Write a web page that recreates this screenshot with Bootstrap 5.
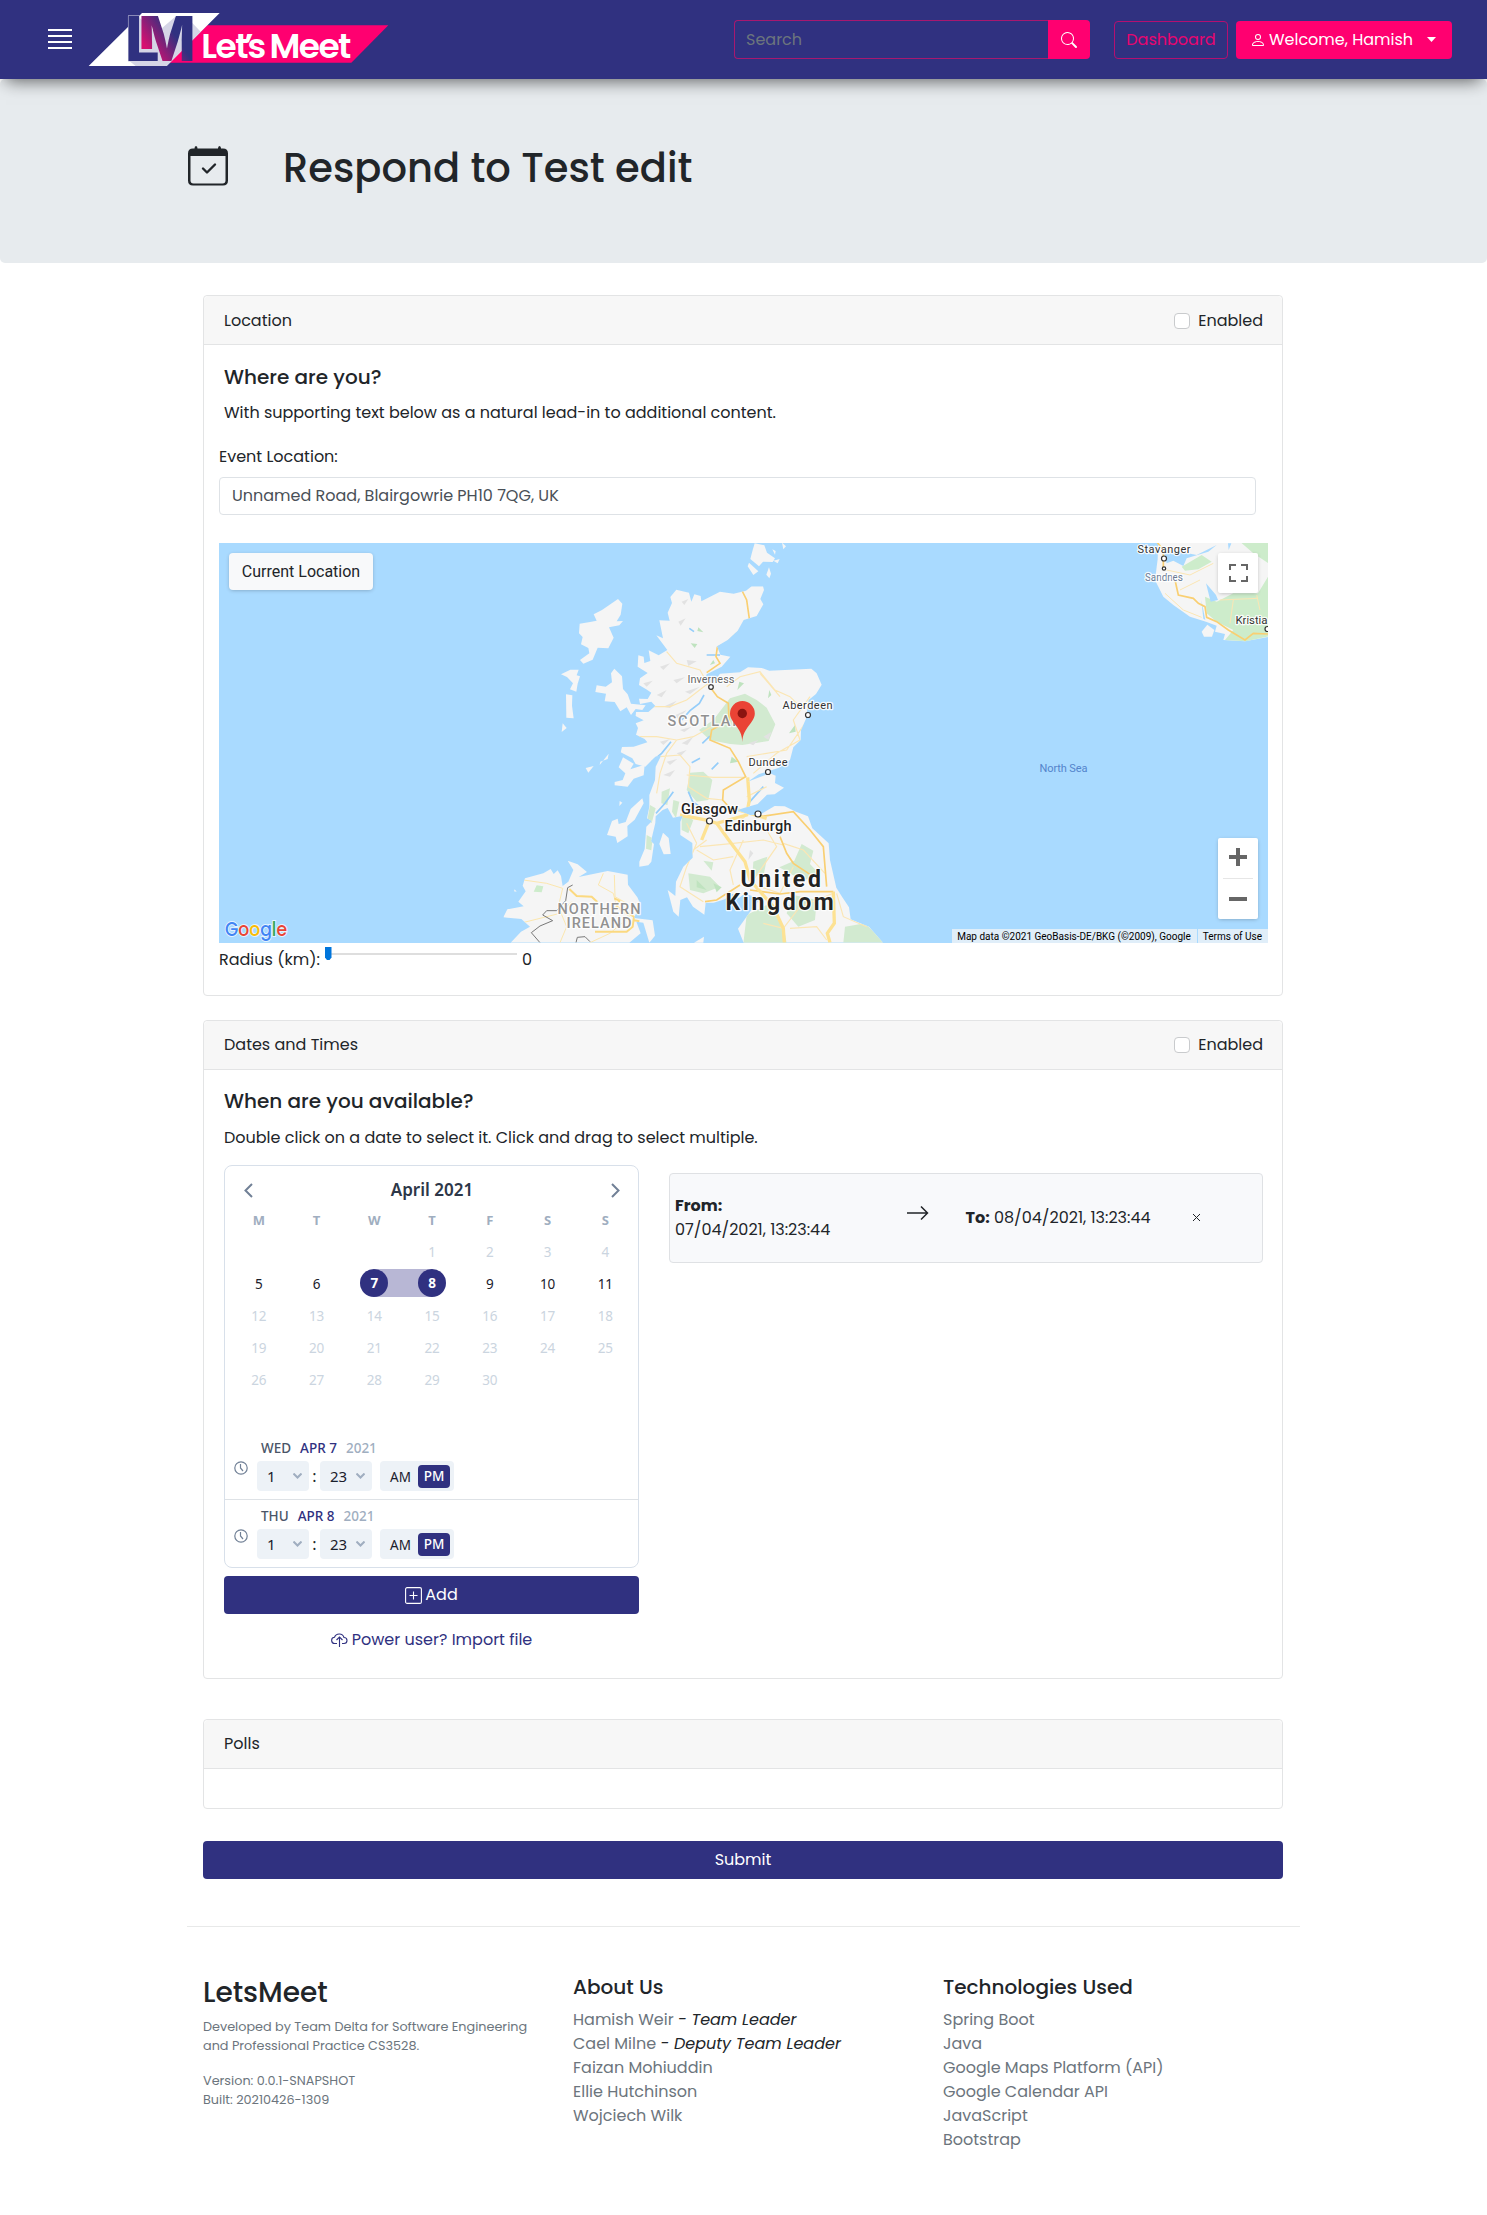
<!DOCTYPE html>
<html lang="en">
<head>
<meta charset="utf-8">
<meta name="viewport" content="width=device-width, initial-scale=1">
<title>LetsMeet</title>
<link href="https://cdn.jsdelivr.net/npm/bootstrap@5.3.0/dist/css/bootstrap.min.css" rel="stylesheet">
<style>
:root{--navy:#303180;--pink:#ff0070}
body{font-family:Poppins,Inter,sans-serif;font-size:16px;color:#212529;line-height:24px}
.topbar{height:79px;background:var(--navy);box-shadow:0 8px 16px -6px rgba(0,0,0,.6);position:relative;z-index:2;padding:0 35px 0 48px}
.topbar svg{overflow:visible}
.topbar .form-control{width:314px;height:39px;background:transparent;border-color:#a8186f;color:#fff;padding-left:11px}
.topbar .form-control::placeholder{color:#6c757d}
.btn-pink{background:var(--pink);color:#fff;border-radius:4px;white-space:nowrap}
.btn-line{border:1px solid #b50f70;color:#e8056f;border-radius:4px;white-space:nowrap}
.go{width:42px;height:39px}
.form-control{border-radius:4px}
.btn{height:38px;padding:6px 0}
.hero{height:184px;background:#e7ebee;border-radius:5px}
.hero h1{font-size:40px;font-weight:500;line-height:48px;margin:1px 0 0 55px}
.page{width:1116px}
.inner{width:1080px;margin-left:17.5px}
.card{border-color:#e3e4e5;border-radius:4px}
.card-header{height:49px;background:#f7f7f7;border-color:#e3e4e5;padding:12px 19px 12px 20px}
.card-title{font-size:20px;font-weight:500;line-height:24px}
.form-check-input{border-color:#c9cbcd;margin-top:4px}
.addr{width:1037px;height:38px;color:#495057;margin-bottom:28px;padding:5px 12px 7px}
.mapbox{width:1049px;height:400px;position:relative;overflow:hidden}
.mapbox svg.base{display:block}
.ctl{position:absolute;background:#fff;border-radius:2px;box-shadow:0 1px 4px -1px rgba(0,0,0,.3)}
.ctl-cur{left:10px;top:10px;width:144px;height:37px;background:#f8f9fa;border-radius:4px;font:16px/37px Roboto,sans-serif;text-align:center}
.ctl-full{right:10px;top:10px;width:40px;height:40px}
.ctl-zoom{right:10px;bottom:24px;width:40px;height:81px}
.attrib{position:absolute;right:0;bottom:0;height:14px;font:10px/15px Roboto,sans-serif;color:#000;gap:1px}
.attrib span{background:#e0eef9;padding:0 6px 0 5px;white-space:nowrap}
.track{width:192px;height:2px;background:#dedede;margin-top:5px;position:relative}
.track i{position:absolute;left:0;top:-6px;width:6.5px;height:13px;background:#0075db;clip-path:polygon(0 0,100% 0,100% 80%,70% 100%,30% 100%,0 80%)}
.cal{width:415px;height:403px;border:1px solid #d8e0ea;border-radius:8px;font-family:"Noto Sans",sans-serif}
.cal-title{font-size:17px;font-weight:600;color:#2d3748}
.week{display:grid;grid-template-columns:repeat(7,57.75px);margin-left:5px;text-align:center;height:32px;line-height:32px;font-size:13.5px;color:#cbd5e0}
.week.names{font-weight:700;color:#a0aec0;font-size:13px}
.week.live{color:#1a202c}
.dot{display:block;position:relative;width:28px;height:28px;margin:1px auto;line-height:29px;border-radius:50%;background:var(--navy);color:#fff;font-weight:700}
.from{background:linear-gradient(#b8b7d5,#b8b7d5) right 1px/50% 28px no-repeat}
.to{background:linear-gradient(#b8b7d5,#b8b7d5) left 1px/50% 28px no-repeat}
.tm{height:68px;padding:6px 0 0 6px}
.clock{margin:23px 9px 0 3px}
.tm .when{font-size:13.5px;font-weight:500;line-height:20px;margin-left:4px;color:#4a5568;gap:9px;height:23px}
.sel{width:52px;height:30px;background:#edf2f7;border-radius:4px;padding:0 7px 0 10px;font-size:15px;color:#1a202c}
.ampm{width:74px;height:30px;background:#edf2f7;border-radius:4px;margin-left:8px;padding:4px 4px 3px 10px;font-size:13.5px;color:#1a202c}
.ampm b{background:var(--navy);color:#fff;border-radius:4px;width:32px;height:23px;line-height:23px;text-align:center;font-weight:500}
.btn-navy{background:var(--navy);color:#fff;border-radius:4px}
.pick{width:594px;height:90px;background:#f8f9fb;border:1px solid #dfe1e4;border-radius:4px;padding:0 5px}
.foot{width:1110px;color:#6c757d;margin-left:17.5px;padding-top:48px}
.foot h4{font-size:28px;font-weight:500;line-height:34px;color:#212529}
.foot h5{font-size:20px;font-weight:500;line-height:24px;color:#212529;margin-bottom:9px}
.tiny{font-size:12.8px;line-height:19px}
em{color:#212529}
</style>
</head>
<body>
<nav class="topbar d-flex align-items-center">
<svg width="24" height="24" viewBox="0 0 24 24" stroke="#fff" stroke-width="2"><path d="M0 2h24M0 8h24M0 14h24M0 20h24"/></svg>
<svg width="302" height="56" viewBox="262 36 906 168" style="margin-left:15.500px">
<defs><linearGradient id="g" gradientUnits="userSpaceOnUse" x1="430" y1="160" x2="550" y2="80"><stop offset=".1" stop-color="#d80f70"/><stop offset=".75" stop-color="#303180"/></linearGradient>
<clipPath id="leg"><path d="M418 40H590V190H470V147H418z"/></clipPath></defs>
<path d="M620 76H1163L1052 188H505z" fill="#ff0070"/>
<path d="M424 39H657L498 198H264L385 78z" fill="#fff"/>
<path d="M415 52L466 100 522 52 555 48 600 95 498 198H405L385 182z" fill="#d5d5e6"/>
<text x="373" y="182" font-family="Inter,sans-serif" font-weight="800" font-size="184" fill="#303180" stroke="#d5d5e6" stroke-width="3" paint-order="stroke">L</text>
<g clip-path="url(#leg)"><text x="412" y="182" font-family="Inter,sans-serif" font-weight="800" font-size="184" fill="url(#g)">M</text></g>
<text x="602" y="173" font-family="Poppins,Inter,sans-serif" font-weight="600" font-size="103" letter-spacing="-4.600" fill="#fff">Let<tspan dx="-9">’</tspan><tspan dx="-13">s</tspan><tspan dx="-6"> Meet</tspan></text>
</svg>
<div class="d-flex ms-auto">
<input class="form-control rounded-end-0 border-end-0" placeholder="Search">
<span class="btn-pink go d-flex align-items-center justify-content-center rounded-start-0"><svg width="16" height="16" viewBox="0 0 16 16" fill="currentColor"><path d="M11.742 10.344a6.5 6.5 0 1 0-1.397 1.398h-.001c.03.04.062.078.098.115l3.85 3.85a1 1 0 0 0 1.415-1.414l-3.85-3.85a1.007 1.007 0 0 0-.115-.1zM12 6.5a5.5 5.5 0 1 1-11 0 5.5 5.5 0 0 1 11 0"/></svg></span>
</div>
<a class="btn btn-line" style="width:114px;margin-left:24px">Dashboard</a>
<a class="btn btn-pink d-flex align-items-center justify-content-center" style="width:216px;margin-left:8px"><svg style="margin-right:3px" width="16" height="16" viewBox="0 0 16 16" fill="currentColor"><path d="M8 8a3 3 0 1 0 0-6 3 3 0 0 0 0 6m2-3a2 2 0 1 1-4 0 2 2 0 0 1 4 0m4 8c0 1-1 1-1 1H3s-1 0-1-1 1-4 6-4 6 3 6 4m-1-.004c-.001-.246-.154-.986-.832-1.664C11.516 10.68 10.289 10 8 10s-3.516.68-4.168 1.332c-.678.678-.83 1.418-.832 1.664z"/></svg>Welcome, Hamish<svg style="margin:0 2px 0 14px" width="9" height="5" viewBox="0 0 9 5" fill="#fff"><path d="M0 0h9L4.500 5z"/></svg></a>
</nav>
<header class="hero"><div class="page mx-auto d-flex" style="padding:64px 0 0 2.500px">
<svg width="40" height="48" viewBox="0 0 40 48"><path fill="#212529" d="M8 3q1.500 0 1.500 2.500h20.500q0-2.500 1.500-2.500t1.500 2.500h2q5 0 5 5v27q0 5-5 5H5q-5 0-5-5v-27q0-5 5-5h1.500Q6.500 3 8 3z"/><path fill="#e7ebee" d="M2.500 13h35v24.500q0 3-3 3h-29q-3 0-3-3z"/><path d="M15 25.500l4 4L27 21.500" fill="none" stroke="#212529" stroke-width="2.400" stroke-linecap="round" stroke-linejoin="round"/></svg>
<h1>Respond to Test edit</h1></div></header>
<main class="page mx-auto"><div class="inner" style="padding-top:32px">
<section class="card" style="height:701px">
<div class="card-header d-flex justify-content-between" style="padding-top:12.500px"><span>Location</span><label class="d-flex gap-2"><input type="checkbox" class="form-check-input">Enabled</label></div>
<div style="padding:20px 15px">
<h5 class="card-title" style="margin:0 5px 12px">Where are you?</h5>
<p style="margin:0 5px 20px">With supporting text below as a natural lead-in to additional content.</p>
<label class="mb-2">Event Location:</label>
<input class="form-control addr" value="Unnamed Road, Blairgowrie PH10 7QG, UK">
<div class="mapbox">
<svg class="base" width="1049" height="400" viewBox="0 0 1049 400">
<defs><path id="isl" d="M354 177L367 191 362 224 350 244 369 243 358 256 327 262 341 293 325 325 293 323 278 359 250 371 240 360 268 340 265 324 243 313 248 291 237 280 239 251 270 246 290 242 281 223 306 210zM183 403L211 389 236 389 230 406 240 409 233 431 229 455 210 448 219 430 201 411zM198 463L217 466 216 497 221 535 199 533zM343 386L366 409 369 447 383 463 393 491 437 496 427 510 407 507 393 525 380 502 361 514 344 486 314 484 318 461 286 456 290 436 317 440 336 427 333 400zM188 550L200 564 185 576zM326 641L323 657 301 665 299 675zM257 684L281 678 265 698zM369 652L401 671 391 688 434 674 431 706 401 716 383 740 344 736 344 726 368 720 376 700 356 682zM427 775L431 790 404 839 382 858 383 889 352 909 347 890 321 885 336 843 353 836 356 852 377 846 392 807zM489 878L506 894 512 942 491 943 478 912zM359 783L367 788 358 798zM764 10L793 16 801 38 825 55 818 66 789 65 777 79 751 57 757 34zM747 68L775 94 760 105 743 79zM807 82L813 101 808 115 799 104zM817 28L827 33 825 44zM846 8L858 19 850 28zM820 62L839 57 833 70z"/>
<clipPath id="gb"><path d="M529 149L567 158 574 185 583 163 602 168 604 184 660 155 701 161 738 152 755 139H789L792 150 781 177 790 193 770 228 731 240 713 272 683 300 651 319 661 344 691 350 665 380 620 403 613 433 643 425 660 401 720 397 744 382 785 384 808 392 934 386 950 400 965 434 948 462 926 480 918 536 903 570 902 600 880 622 870 660 835 684 776 703 743 725 810 700 827 707 825 729 852 743 824 763 801 764 773 792 734 803 711 811 750 825 780 824 824 798 854 799 888 815 924 829 937 865 986 910 990 960 1009 1043 1027 1072 1047 1102 1052 1138 1107 1160 1149 1208H731L714 1166 760 1102 780 1078 735 1060 717 1074 697 1061 674 1078 641 1088 617 1088 613 1124 579 1100 561 1072 541 1080 536 1130 520 1115 503 1050 526 1068 528 1025 550 980 578 953 577 909 541 885 541 845 549 827 519 833 503 804 488 810 467 829 466 849 453 904 462 912 454 965 445 976 418 980 418 965 434 927 439 860 456 843 441 835 448 800 448 765 465 720 467 680 484 646 466 650 436 680 407 672 397 655 362 637 366 621 401 620 442 607 434 597 408 584 414 564 407 550 431 541 407 528 408 516 445 516 466 498 454 485 420 492 417 476 443 477 454 458 441 449 417 435 420 415 443 399 413 380 415 346 431 350 433 369 451 363 446 331 476 346 502 330 469 286 489 295 478 241 509 242 503 218 516 189 511 171z"/></clipPath>
<clipPath id="ni"><path d="M203 962L233 973 261 996 236 1011 323 993 383 1004 384 1034 412 1072 421 1092 402 1134 458 1141 465 1187 448 1208 430 1148 409 1145 422 1180 388 1208H32L63 1175 90 1160 64 1137 10 1132 22 1108 71 1099 55 1085 77 1054 68 1037 75 1015 130 1000 152 987 161 1002 173 991 183 1008 188 1038 205 1025 220 990z"/></clipPath></defs>
<rect width="1049" height="400" fill="#a9daff"/>
<g transform="translate(281 -3) scale(.33333)">
<use href="#isl" fill="#f5f5f5"/><path d="M582 1208L612 1190 610 1208zM44 1048l6 7-8-1z" fill="#f5f5f5"/>
<g clip-path="url(#ni)"><rect y="900" width="500" height="320" fill="#f5f5f5"/>
<path d="M110 1036l20 3-5 18-24-2z" fill="#cdeccb"/>
<path d="M70 1020L140 1030 188 1045 175 1100 200 1160 180 1208M310 1000L295 1035 340 1060 350 1100 388 1130 330 1180 270 1208M343 1005L345 1070 380 1090M215 1085L180 1120 60 1150" fill="none" stroke="#fbe6ae" stroke-width="3"/>
<path d="M208 1047L230 1068 275 1070 292 1086M343 1075L358 1082 350 1100 402 1130 398 1160 380 1175H285M398 1140l20 4" fill="none" stroke="#fbd980" stroke-width="6"/>
<path d="M218 1035L203 1043 197 1082 170 1112 140 1112 128 1125 158 1142 120 1158 94 1178 120 1208M228 1208L232 1192 255 1190 270 1205" fill="none" stroke="#777" stroke-width="3"/></g>
<g clip-path="url(#gb)"><rect x="350" y="100" width="850" height="1120" fill="#f5f5f5"/>
<path d="M640 540L690 475 735 461 770 480 800 503 826 553 806 603 727 615 690 612 630 600 597 570zM570 698L610 695 637 720 625 780 590 785 560 750zM565 1000L630 1010 660 1040 610 1060 570 1050zM610 962l30 5-5 25zM760 965l42-15-10 50-35 10zM905 912l35 20-10 40 28 30-50 20-70-40 45-20zM880 1065l70 15-5 60-50 20-35-40zM740 1125l60-30 50 60 10 55H730zM1035 1160l60-10 60 58H1030zM485 755l25-10-8 50-18-5zM520 780l18 5-10 50-12-20zM545 820l35 20-15 40-20-10zM450 795l17 10-12 45-12-15zM440 885l18 10-4 36-16-5z" fill="#d2ead0"/>
<path d="M595 262l15 15-18-4zM572 310l20 2-8 12zM640 360l-10 15 15-5zM808 450l6 15-10 10zM885 555l-18 25 20-5zM718 425l14 5-20 20zM695 650l20 15-25 5zM590 1020l30 30-30-8zM640 1030l25 12-15 15z" fill="#bfe3bf"/>
<path d="M470 465l30-15-15 22zM490 500l40-18-20 22zM515 530l45-20-25 26zM430 430l28-8-18 18zM520 420l35-8-25 18zM555 455l45-15-30 22zM480 380l30-10-20 20zM540 570l35-10-22 16zM480 605l30-8-20 18zM530 640l30-10-18 18zM500 665l32-8-22 18zM490 705l35-15-15 20zM545 610l35-20-18 25zM560 360l30 4-25 14zM545 185l20-8-12 18zM535 245l22-10-15 22zM745 610l30-10-15 16zM790 590l25-15-10 24zM750 930l-5 30 15-20z" fill="#e2e2e2"/>
<path d="M612 465L598 490 570 512 545 540M630 588L607 610M513 605L485 640 455 665M520 755L495 790 468 820M655 668L635 688M600 655L575 668M568 265L582 275M660 345H620M565 755L578 785 600 800M790 740L745 790" fill="none" stroke="#94cdfa" stroke-width="5"/>
<path d="M500 335L530 370 600 390 625 435M625 430L560 480 510 500 430 500M410 590L470 590 530 600 580 590 635 560M530 600L500 640 480 700 470 760M480 650L540 645 570 680 565 740 620 775 670 780M680 440L720 410 780 395 825 450 870 470 900 500M780 400L840 470M930 470L880 540 900 600 830 640 760 700M640 712H735M740 650L860 630 915 550M590 910L560 980 540 1040 610 1085M600 920L700 910 790 900 850 915M730 900L690 990 700 1035M850 910L910 930 975 1000M800 870L830 920 760 1020M1000 1060L900 1100 850 1165 790 1150M1010 1060L1030 1130 1100 1160M870 1165L950 1160 980 1200M620 900L580 930M740 770L800 740M735 830L680 870M880 980L840 1060 780 1040M590 930L640 960 700 950M560 850L590 910M560 705L640 712" fill="none" stroke="#fbe6b4" stroke-width="3.500"/>
<path d="M725 150L740 180 748 236 720 270 680 308 652 322 648 350 660 370 620 398M633 445L652 470 685 490 687 540 635 570 630 600 690 625 715 665 737 710 670 750 668 780 700 815M780 830L880 815 930 870 970 920 980 1040M840 890L860 940 880 970 940 1010M615 1085L650 1080 720 1035M750 1050L840 1062 900 1055 1000 1055" fill="none" stroke="#f9cf72" stroke-width="5"/>
<path d="M743 712L748 780 740 825 650 850 620 840 540 825M650 850L690 905 735 965 750 1020 820 1100 850 1165 853 1208M625 850L605 900M800 835L715 810M1000 1055L1003 1150 982 1180 990 1208" fill="none" stroke="#fde293" stroke-width="10"/></g>
</g>
<g transform="translate(681 -13) scale(.33333)"><path fill="#f5f5f5" d="M775 30H1110V320L1035 334 970 330 975 312 945 305 950 287 918 275 870 260 820 225 790 200 765 150 773 88z"/><path fill="#f5f5f5" d="M905 305L922 284 943 300 936 320 912 320z"/>
<path fill="#cdeccb" d="M915 200L950 215 1000 190 1074 190 1110 130V318L1038 334 975 330 1000 300 950 275 920 250zM845 110L905 75 935 95 895 118 855 122zM1020 35h85v65l-45-30z"/>
<path fill="#a9daff" d="M815 60L890 75 950 45 925 65 860 85 850 108 820 92 800 100 790 60zM918 160l30 35 6 15-22 5zM984 40h10l-8 20zM904 210l12 60-6-4z"/>
<path d="M770 35L790 60V115M825 150L835 195 880 205 895 220 915 230 920 262 950 275 985 300 1035 330 1060 310 1104 312" fill="none" stroke="#f9cf72" stroke-width="5"/><path d="M800 120L870 135 940 100M900 150L840 180M1000 210L990 280M1070 195L1080 240M960 210L1074 205M795 190L850 240 905 262" fill="none" stroke="#fbe6b4" stroke-width="3"/></g>
<g fill="#fff" stroke="#333" stroke-width="1.200"><circle cx="492" cy="144" r="2.300"/><circle cx="589" cy="172" r="2.500"/><circle cx="549" cy="229" r="2.500"/><circle cx="490.500" cy="278" r="3"/><circle cx="539" cy="271" r="3"/><circle cx="945" cy="15.500" r="2.500"/><circle cx="945" cy="25.500" r="1.700"/><circle cx="1048.500" cy="86" r="2.500"/></g>
<g font-family="Roboto,sans-serif" font-size="11" text-anchor="middle" fill="#333" stroke="#fff" stroke-opacity=".85" stroke-width="2.500" paint-order="stroke" stroke-linejoin="round">
<text x="492" y="139.500" fill="#666" textLength="47">Inverness</text><text x="588.500" y="166" textLength="50">Aberdeen</text><text x="549" y="223" textLength="39">Dundee</text>
<text x="490.500" y="271" font-size="14.500" font-weight="500" fill="#222" textLength="57">Glasgow</text><text x="539" y="288" font-size="14.500" font-weight="500" fill="#222" textLength="67">Edinburgh</text>
<text x="945" y="10" textLength="53">Stavanger</text><text x="945" y="37.500" font-size="10" fill="#6a7a94" textLength="38">Sandnes</text><text x="1032.500" y="80.500" font-size="11.500" textLength="32">Kristia</text>
<text x="486" y="183" font-size="14.500" font-weight="500" fill="#919191" textLength="75">SCOTLAN</text>
<text x="380" y="371" font-size="14.500" font-weight="500" fill="#919191" textLength="83">NORTHERN</text><text x="380" y="385" font-size="14.500" font-weight="500" fill="#919191" textLength="65">IRELAND</text>
<text font-size="23" font-weight="700" fill="#222" letter-spacing="2.600"><tspan x="563" y="344">United</tspan><tspan x="562" y="367">Kingdom</tspan></text></g>
<text x="844.500" y="229" font-family="Roboto,sans-serif" font-size="11" fill="#5484cc" text-anchor="middle" textLength="48">North Sea</text>
<path d="M523.300 199C523.300 184 511 180 511 170.500a12.400 12.400 0 0 1 24.800 0C535.800 180 524 184 523.300 199z" fill="#ea4335"/><circle cx="523.300" cy="170.500" r="4.700" fill="#8b1410"/>
<text x="6" y="393" font-family="Poppins,Inter,sans-serif" font-size="20" font-weight="500" textLength="62" lengthAdjust="spacingAndGlyphs" stroke="#fff" stroke-opacity=".7" stroke-width="2" paint-order="stroke"><tspan fill="#4285f4">G</tspan><tspan fill="#ea4335">o</tspan><tspan fill="#fbbc04">o</tspan><tspan fill="#4285f4">g</tspan><tspan fill="#34a853">l</tspan><tspan fill="#ea4335">e</tspan></text>
</svg>
<div class="ctl ctl-cur">Current Location</div>
<div class="ctl ctl-full"><svg width="40" height="40" fill="none" stroke="#666" stroke-width="2"><path d="M12 17v-5h6M23 12h6v5M29 23v5h-6M18 28h-6v-5"/></svg></div>
<div class="ctl ctl-zoom"><svg width="40" height="81"><path d="M11 17h7v-7h4v7h7v4h-7v7h-4v-7h-7zM11 59h18v4H11z" fill="#666"/><path d="M5 40h30v1H5z" fill="#e6e6e6"/></svg></div>
<div class="attrib d-flex"><span>Map data ©2021 GeoBasis-DE/BKG (©2009), Google</span><span>Terms of Use</span></div>
</div>
<div class="d-flex" style="margin-top:5px"><span style="width:106px">Radius (km):</span><div class="track"><i></i></div><span style="margin-left:5px">0</span></div>
</div></section>

<section class="card" style="height:659px;margin-top:24px">
<div class="card-header d-flex justify-content-between"><span>Dates and Times</span><label class="d-flex gap-2"><input type="checkbox" class="form-check-input">Enabled</label></div>
<div style="padding:19px 19px 0 20px">
<h5 class="card-title" style="margin-bottom:13px">When are you available?</h5>
<p style="margin-bottom:15px">Double click on a date to select it. Click and drag to select multiple.</p>
<div class="d-flex justify-content-between align-items-start">
<div style="width:415px">
<div class="cal">
<div class="d-flex justify-content-between align-items-center" style="height:38px;padding:10px 18px 0 19px">
<svg width="9" height="15" fill="none" stroke="#718096" stroke-width="2"><path d="M8 1L1.500 7.500 8 14"/></svg><span class="cal-title">April 2021</span><svg width="9" height="15" fill="none" stroke="#718096" stroke-width="2"><path d="M1 1l6.500 6.500L1 14"/></svg></div>
<div class="week names"><span>M</span><span>T</span><span>W</span><span>T</span><span>F</span><span>S</span><span>S</span></div>
<div class="week"><span></span><span></span><span></span><span>1</span><span>2</span><span>3</span><span>4</span></div>
<div class="week live"><span>5</span><span>6</span><span class="from"><b class="dot">7</b></span><span class="to"><b class="dot">8</b></span><span>9</span><span>10</span><span>11</span></div>
<div class="week"><span>12</span><span>13</span><span>14</span><span>15</span><span>16</span><span>17</span><span>18</span></div>
<div class="week"><span>19</span><span>20</span><span>21</span><span>22</span><span>23</span><span>24</span><span>25</span></div>
<div class="week"><span>26</span><span>27</span><span>28</span><span>29</span><span>30</span></div>
<div style="height:36px"></div>
<div class="tm d-flex border-bottom"><svg class="clock" width="14" height="14" fill="none" stroke="#718096" stroke-width="1.200"><circle cx="7" cy="7" r="6.200"/><path d="M6.500 3v4l2.500 3"/></svg><div><div class="when d-flex"><span>WED</span><span style="color:#303180">APR 7</span><span style="color:#a0aec0">2021</span></div>
<div class="d-flex align-items-center"><div class="sel d-flex align-items-center justify-content-between">1<svg width="9" height="6" fill="none" stroke="#a0aec0" stroke-width="2"><path d="M.5.500l4 4 4-4"/></svg></div><span class="text-center" style="width:11px">:</span><div class="sel d-flex align-items-center justify-content-between">23<svg width="9" height="6" fill="none" stroke="#a0aec0" stroke-width="2"><path d="M.5.500l4 4 4-4"/></svg></div><div class="ampm d-flex justify-content-between"><span>AM</span><b>PM</b></div></div></div></div>
<div class="tm d-flex"><svg class="clock" width="14" height="14" fill="none" stroke="#718096" stroke-width="1.200"><circle cx="7" cy="7" r="6.200"/><path d="M6.500 3v4l2.500 3"/></svg><div><div class="when d-flex"><span>THU</span><span style="color:#303180">APR 8</span><span style="color:#a0aec0">2021</span></div>
<div class="d-flex align-items-center"><div class="sel d-flex align-items-center justify-content-between">1<svg width="9" height="6" fill="none" stroke="#a0aec0" stroke-width="2"><path d="M.5.500l4 4 4-4"/></svg></div><span class="text-center" style="width:11px">:</span><div class="sel d-flex align-items-center justify-content-between">23<svg width="9" height="6" fill="none" stroke="#a0aec0" stroke-width="2"><path d="M.5.500l4 4 4-4"/></svg></div><div class="ampm d-flex justify-content-between"><span>AM</span><b>PM</b></div></div></div></div>
</div>
<a class="btn btn-navy d-flex align-items-center justify-content-center" style="margin-top:8px;gap:3px"><svg width="17" height="17" fill="none" stroke="#fff" stroke-width="1.100"><rect x=".6" y=".6" width="15.800" height="15.800" rx="1.500"/><path d="M8.500 4.500v8M4.500 8.500h8"/></svg>Add</a>
<div class="d-flex align-items-center justify-content-center gap-1" style="color:#303180;margin-top:14px"><svg width="17" height="16" viewBox="0 0 17 16" fill="none" stroke="#303180" stroke-width="1.100"><path d="M6 11.500H4a3 3 0 0 1-.5-6.200A5 5 0 0 1 13 5.500a3 3 0 0 1 0 6h-2M8.500 15V5.500M5.500 8l3-3 3 3"/></svg>Power user? Import file</div>
</div>
<div class="pick d-flex" style="margin-top:8px"><div style="width:232px;padding-top:20px"><b>From:</b><br>07/04/2021, 13:23:44</div>
<svg style="margin-top:31px" width="22" height="16" fill="none" stroke="#212529" stroke-width="1.500"><path d="M0 8h20M14 1.500L20.500 8 14 14.500"/></svg>
<div style="margin:32px 0 0 36.500px;width:223px"><b>To:</b> 08/04/2021, 13:23:44</div><svg style="margin-top:39px;margin-left:3px" width="9" height="9" stroke="#212529"><path d="M1 1l7 7M8 1L1 8"/></svg></div>
</div></div></section>

<section class="card" style="height:90px;margin-top:40px"><div class="card-header">Polls</div></section>
<a class="btn btn-navy d-block" style="margin-top:32px">Submit</a>
</div>
<hr style="margin:47px 2px 0 1px;opacity:.1">
<footer class="foot row gx-0">
<div class="col-4"><h4 style="margin:1px 0 7px">LetsMeet</h4><div class="tiny">Developed by Team Delta for Software Engineering<br>and Professional Practice CS3528.</div><div class="tiny" style="margin-top:16px">Version: 0.0.1-SNAPSHOT<br>Built: 20210426-1309</div></div>
<div class="col-4"><h5>About Us</h5>Hamish Weir <em>- Team Leader</em><br>Cael Milne <em>- Deputy Team Leader</em><br>Faizan Mohiuddin<br>Ellie Hutchinson<br>Wojciech Wilk</div>
<div class="col-4"><h5>Technologies Used</h5>Spring Boot<br>Java<br>Google Maps Platform (API)<br>Google Calendar API<br>JavaScript<br>Bootstrap</div>
</footer></main>
<script src="https://cdn.jsdelivr.net/npm/bootstrap@5.3.0/dist/js/bootstrap.bundle.min.js"></script>
</body>
</html>
